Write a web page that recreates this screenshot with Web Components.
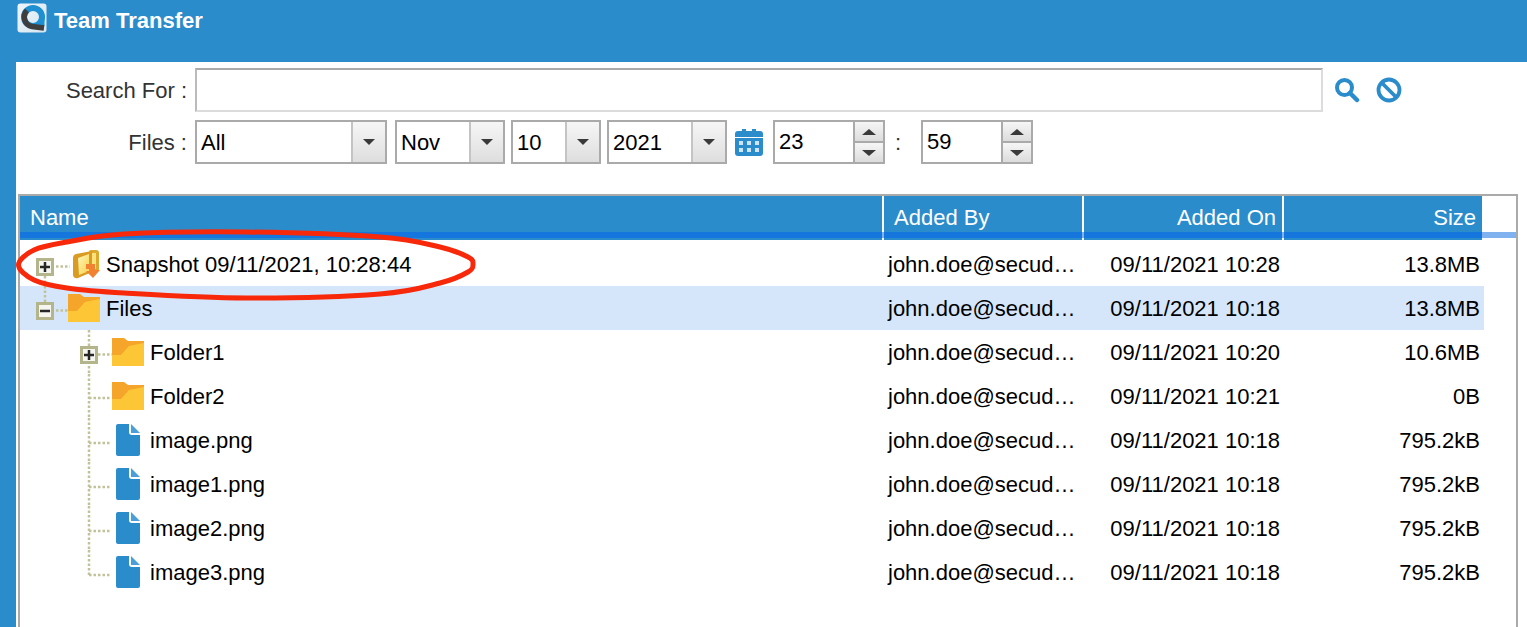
<!DOCTYPE html>
<html><head><meta charset="utf-8"><title>Team Transfer</title>
<style>html,body{margin:0;padding:0;height:100%;overflow:hidden;background:#2b8ccc}body{font-family:"Liberation Sans",Arial,sans-serif;font-size:22px}</style>
</head><body>
<tt-window heading="Team Transfer">
  <tt-filter></tt-filter>
  <tt-table>
    <tt-row name="Snapshot 09/11/2021, 10:28:44" on="09/11/2021 10:28" size="13.8MB" kind="snapshot" toggle="plus" level="0" down="1"></tt-row>
    <tt-row name="Files" on="09/11/2021 10:18" size="13.8MB" kind="folder" toggle="minus" level="0" up="1" selected></tt-row>
    <tt-row name="Folder1" on="09/11/2021 10:20" size="10.6MB" kind="folder" toggle="plus" level="1" trunk="1"></tt-row>
    <tt-row name="Folder2" on="09/11/2021 10:21" size="0B" kind="folder" level="1" trunk="1"></tt-row>
    <tt-row name="image.png" on="09/11/2021 10:18" size="795.2kB" kind="file" level="1" trunk="1"></tt-row>
    <tt-row name="image1.png" on="09/11/2021 10:18" size="795.2kB" kind="file" level="1" trunk="1"></tt-row>
    <tt-row name="image2.png" on="09/11/2021 10:18" size="795.2kB" kind="file" level="1" trunk="1"></tt-row>
    <tt-row name="image3.png" on="09/11/2021 10:18" size="795.2kB" kind="file" level="1" trunk="last"></tt-row>
  </tt-table>
</tt-window>
<script>
const shadow=(el,html)=>{el.attachShadow({mode:'open'}).innerHTML=html};

// closed smooth curve through points (Catmull-Rom converted to cubic Bezier)
const smooth=p=>{const n=p.length;let d=`M${p[0][0]} ${p[0][1]}`;
for(let i=0;i<n;i++){const a=p[(i-1+n)%n],b=p[i],c=p[(i+1)%n],e=p[(i+2)%n];
d+=`C${(b[0]+(c[0]-a[0])/6).toFixed(1)} ${(b[1]+(c[1]-a[1])/6).toFixed(1)} ${(c[0]-(e[0]-b[0])/6).toFixed(1)} ${(c[1]-(e[1]-b[1])/6).toFixed(1)} ${c[0]} ${c[1]}`}
return d+'Z'};
const RING=smooth([[2.5,43],[18,28],[51,20],[108,12],[230,10],[364,15],[424,25],[452,35],[457,42],[452,50],[424,61],[364,72],[230,76],[108,71],[51,66],[18,58]]);

class TtWindow extends HTMLElement{connectedCallback(){shadow(this,`<style>
:host{display:block;height:627px;background:#2b8ccc;color:#333;overflow:hidden}
.bar{height:62px;box-sizing:border-box;display:flex;align-items:flex-start;padding:3px 0 0 17px;gap:7px;color:#fff;font-weight:bold;font-size:22px}
.bar span{line-height:35px}
.main{margin-left:16px;height:565px;background:#fff;box-sizing:border-box;padding:6px 0 0 2px;overflow:hidden;position:relative}
.logo{display:block;width:30px;height:30px}
.mark{position:absolute;left:0;top:160px;pointer-events:none}
</style>
<div class="bar"><svg class="logo" viewBox="0 0 30 30">
<defs><linearGradient id="lg" x1="0" y1="0" x2="1" y2="1"><stop offset="0" stop-color="#eef5fa"/><stop offset="1" stop-color="#d6e6f0"/></linearGradient></defs>
<rect x=".5" y=".5" width="29" height="29" rx="3" fill="url(#lg)"/>
<circle cx="16" cy="14" r="9" fill="none" stroke="#1e8fd0" stroke-width="6"/>
<path d="M26 14v9" stroke="#1e8fd0" stroke-width="3"/>
<path d="M10 7.500A9.500 9.500 0 0 0 15 23.500L27 25" fill="none" stroke="#3e3e3e" stroke-width="5.500"/>
</svg><span>${this.getAttribute('heading')}</span></div>
<div class="main"><slot></slot>
<svg class="mark" width="462" height="84" viewBox="0 0 462 84"><path d="${RING}" fill="none" stroke="#f7290a" stroke-width="5"/></svg>
</div>`)}}

class TtFilter extends HTMLElement{connectedCallback(){shadow(this,`<style>
:host{display:grid;grid-template-columns:169px auto;column-gap:8px;row-gap:8px;align-items:center;font-size:22px;color:#333}
.label{text-align:right;white-space:nowrap;padding-top:2px}
.search{display:flex;align-items:center;gap:11px}
.input{width:1128px;height:44px;box-sizing:border-box;border:2px solid #dcdcdc;border-top-color:#aaa;border-left-color:#bbb;background:#fff}
.line{display:flex;align-items:center;color:#000}
.cal{display:block;margin:0 10px 0 8px}
.colon{width:36px;box-sizing:border-box;padding:2px 0 0 10px;color:#333}
.icons{display:flex;gap:16px;align-items:center}
svg{display:block}
</style>
<div class="label">Search For :</div>
<div class="search"><div class="input"></div><div class="icons">
<svg width="26" height="26" viewBox="0 0 26 26"><circle cx="10.500" cy="10.500" r="7.500" fill="none" stroke="#2b8ccc" stroke-width="4"/><path d="M16 16l7 7" stroke="#2b8ccc" stroke-width="4.500" stroke-linecap="round"/></svg>
<svg width="26" height="26" viewBox="0 0 26 26"><circle cx="13" cy="13" r="10.500" fill="none" stroke="#2b8ccc" stroke-width="3.800"/><path d="M6 6l14 14" stroke="#2b8ccc" stroke-width="3.800"/></svg>
</div></div>
<div class="label">Files :</div>
<div class="line">
<tt-combo w="192" text="All" style="margin-right:8px"></tt-combo>
<tt-combo w="110" text="Nov" style="margin-right:6px"></tt-combo>
<tt-combo w="90" text="10" style="margin-right:6px"></tt-combo>
<tt-combo w="120" text="2021"></tt-combo>
<svg class="cal" width="28" height="28" viewBox="0 0 28 28"><path d="M3 3h4V1h4v2h6V1h4v2h4a3 3 0 0 1 3 3v3H0V6a3 3 0 0 1 3-3z" fill="#2b8ccc"/><path d="M0 10h28v15a3 3 0 0 1-3 3H3a3 3 0 0 1-3-3z" fill="#2b8ccc"/><g fill="#cfe5f4"><rect x="4" y="13" width="4" height="4"/><rect x="12" y="13" width="4" height="4"/><rect x="20" y="13" width="4" height="4"/><rect x="4" y="20" width="4" height="4"/><rect x="12" y="20" width="4" height="4"/><rect x="20" y="20" width="4" height="4"/></g></svg>
<tt-spin w="112" text="23"></tt-spin><span class="colon">:</span><tt-spin w="112" text="59"></tt-spin>
</div>`)}}

class TtCombo extends HTMLElement{connectedCallback(){const w=this.getAttribute('w');shadow(this,`<style>
:host{display:flex;width:${w}px;height:44px;box-sizing:border-box;border:2px solid #aaa;background:#fff;color:#000;font-size:22px}
.t{flex:1;line-height:42px;padding-left:4px;min-width:0}
.b{width:34px;box-sizing:border-box;border-left:2px solid #c4c4c4;background:linear-gradient(#f6f6f6,#dedede);display:flex;align-items:center;justify-content:center}
.b i{display:block;width:0;height:0;border:6px solid transparent;border-top:6px solid #3a3a3a;border-bottom:0}
</style><div class="t">${this.getAttribute('text')}</div><div class="b"><i></i></div>`)}}

class TtSpin extends HTMLElement{connectedCallback(){const w=this.getAttribute('w');shadow(this,`<style>
:host{display:flex;width:${w}px;height:44px;box-sizing:border-box;border:2px solid #aaa;background:#fff;color:#000;font-size:22px}
.t{flex:1;line-height:40px;padding-left:4px}
.c{width:30px;box-sizing:border-box;display:flex;flex-direction:column;background:#aaa;gap:2px;border-left:2px solid #aaa}
.b{flex:1;background:linear-gradient(#f6f6f6,#dcdcdc);display:flex;align-items:center;justify-content:center}
.u{display:block;width:0;height:0;border:7px solid transparent;border-bottom:6px solid #3a3a3a;border-top:0}
.d{display:block;width:0;height:0;border:7px solid transparent;border-top:6px solid #3a3a3a;border-bottom:0}
</style><div class="t">${this.getAttribute('text')}</div><div class="c"><div class="b"><i class="u"></i></div><div class="b"><i class="d"></i></div></div>`)}}

class TtTable extends HTMLElement{connectedCallback(){shadow(this,`<style>
:host{display:block;margin-top:30px;width:1500px;height:433px;box-sizing:border-box;border:2px solid #aaa;border-bottom:0;background:#fff;overflow:hidden}
.head{display:grid;grid-template-columns:862px 198px 198px 198px;column-gap:2px;height:44px;background:#fff linear-gradient(#80b2f0,#80b2f0) 0 36px/100% 6px no-repeat;color:#fff;font-size:22px;margin-bottom:2px}
.head div{background:linear-gradient(#1577dd,#1577dd) 0 36px/100% 6px no-repeat,#2b8ccc;line-height:44px;white-space:nowrap}
.l{padding-left:10px}.r{text-align:right;padding-right:6px}
</style><div class="head"><div class="l">Name</div><div class="l">Added By</div><div class="r">Added On</div><div class="r">Size</div></div><slot></slot>`)}}

const DOT='#c2c29a';
const dots=d=>`<path d="${d}" fill="none" stroke="${DOT}" stroke-width="2.500" stroke-dasharray="2.500 2"/>`;
const tog=(x,y,t)=>`<rect x="${x+1.5}" y="${y+1.5}" width="15" height="15" fill="#f6f6f0" stroke="#b5b58c" stroke-width="3"/><path d="M${x+4} ${y+9}h10${t==='plus'?`M${x+9} ${y+4}v10`:''}" stroke="#262626" stroke-width="2.500"/>`;
const folder=(x,y)=>`<g transform="translate(${x} ${y})"><path d="M0 0h12l4 3h16v4L17 9l-8 9H0z" fill="#f5a62a"/><path d="M0 28V17h9l8-9 15-3v23z" fill="#fdc636"/></g>`;
const file=(x,y)=>`<g transform="translate(${x} ${y})"><path d="M2 0h11v8q0 3 3 3h8v19a2 2 0 0 1-2 2H2a2 2 0 0 1-2-2V2a2 2 0 0 1 2-2z" fill="#2b8ccc"/><path d="M15 0l9 9h-9z" fill="#4a9fd8"/></g>`;
const snap=(x,y)=>`<g transform="translate(${x} ${y})"><defs><linearGradient id="sf" x1="0" y1="0" x2="1" y2="1"><stop offset="0" stop-color="#fff6b8"/><stop offset="1" stop-color="#f7d24e"/></linearGradient></defs>
<path d="M17 2q0-2 2-2h5q3 0 3 3v18l-10 3z" fill="#dca92c"/><path d="M20 3h4v16h-4z" fill="#fbe27a"/>
<path d="M1 8q0-3 3-4l16-3v21L6 28q-4 1-5-3z" fill="#d99b22"/><path d="M6 8l11-4v17L7 25z" fill="url(#sf)"/>
<path d="M14 14h9v6h5l-7 8-7-7h4v-2h-4z" fill="#f08232"/></g>`;

class TtRow extends HTMLElement{connectedCallback(){
const a=k=>this.getAttribute(k);const lvl=+a('level');const k=a('kind');const sel=this.hasAttribute('selected');
const row0=lvl===0&&k==='snapshot';
let g='';
// origin of gutter: table inner left (x=20). y=0 is the row's top.
if(row0){g+=dots('M25 34V44');g+=tog(16,16,'plus');g+=dots('M36 24.500H50');g+=snap(52,8)}
else if(lvl===0){g+=dots('M25 0V16');g+=tog(16,16,'minus');g+=dots('M36 24.500H48');g+=folder(48,8)}
else{
 const tr=a('trunk');
 g+=dots(`M69 0V${tr==='last'?25:44}`);
 if(a('toggle')){g+=tog(60,16,'plus');g+=dots('M78 24.500H92')}else g+=dots(`M69 ${k==='file'?25:24}H90`);
 g+=k==='folder'?folder(92,8):file(96,6);
}
const gw=lvl===0?86:130;
shadow(this,`<style>
:host{display:grid;grid-template-columns:865px 200px 200px 199px;width:1464px;height:44px;background:${sel?'#d5e6fb':'transparent'};color:#000;font-size:22px;line-height:46px;white-space:nowrap}
.n{display:flex;overflow:visible}
svg{display:block;flex:none;overflow:visible}
.by{padding-left:3px;overflow:hidden}
.on{text-align:right;padding-right:5px}
.sz{text-align:right;padding-right:4px}
</style><div class="n"><svg width="${gw}" height="44" viewBox="0 0 ${gw} 44">${g}</svg><span>${a('name')}</span></div><div class="by">john.doe@secud…</div><div class="on">${a('on')}</div><div class="sz">${a('size')}</div>`)}}

customElements.define('tt-window',TtWindow);
customElements.define('tt-filter',TtFilter);
customElements.define('tt-combo',TtCombo);
customElements.define('tt-spin',TtSpin);
customElements.define('tt-table',TtTable);
customElements.define('tt-row',TtRow);
</script>
</body></html>
